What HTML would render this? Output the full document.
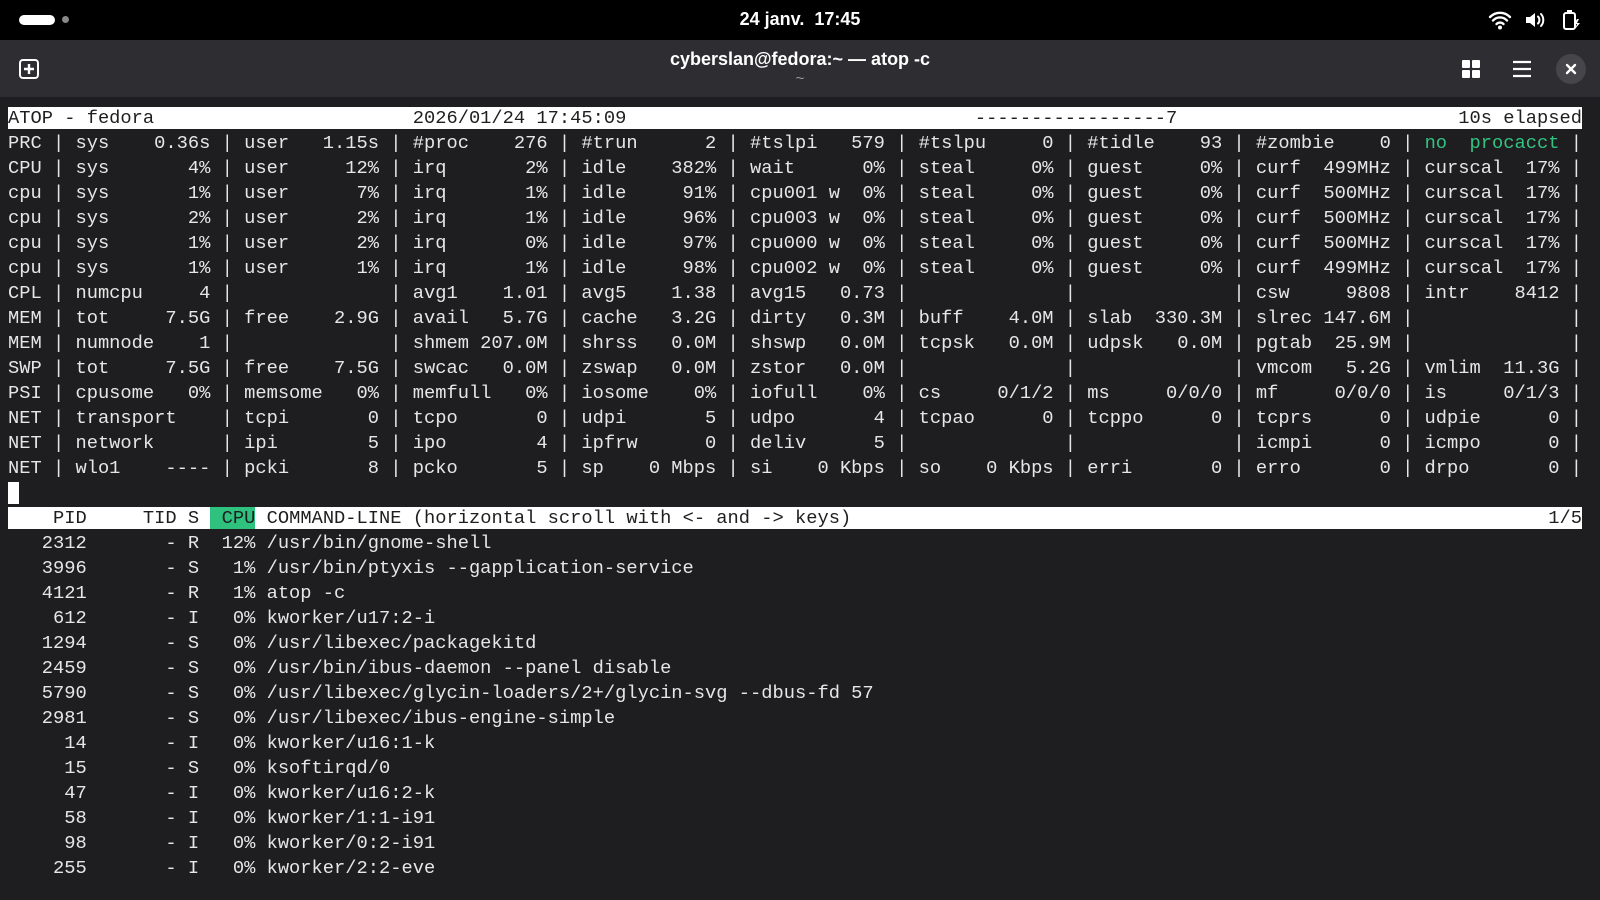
<!DOCTYPE html>
<html><head><meta charset="utf-8">
<style>
html,body{margin:0;padding:0;width:1600px;height:900px;overflow:hidden;background:#1e1e20;}
#top{position:absolute;left:0;top:0;width:1600px;height:40px;background:#000;}
#clock{position:absolute;left:0;width:1600px;top:9px;text-align:center;color:#fff;font:bold 18px "Liberation Sans",sans-serif;}
#hb{position:absolute;left:0;top:40px;width:1600px;height:57px;background:#2e2e32;}
#title{position:absolute;left:0;width:1600px;top:9px;text-align:center;color:#fff;font:bold 18px "Liberation Sans",sans-serif;}
#sub{position:absolute;left:0;width:1600px;top:30px;text-align:center;color:#999;font:15px "Liberation Sans",sans-serif;}
#term{position:absolute;left:8px;top:106px;margin:0;font-family:"Liberation Mono",monospace;font-size:18.74px;line-height:25px;color:#e6e6e6;white-space:pre;}
.inv{background:#fff;color:#1e1e20;}
.g{color:#33c27f;}
.gb{background:#2ec27e;color:#1e1e20;}
.cur{background:#fff;}
</style></head><body>
<div id="top">
 <div style="position:absolute;left:19px;top:15px;width:36px;height:10px;border-radius:5px;background:#fff"></div>
 <div style="position:absolute;left:62px;top:16px;width:7px;height:7px;border-radius:4px;background:#888"></div>
 <div id="clock">24 janv.&nbsp; 17:45</div>
 <svg style="position:absolute;left:1488px;top:10px" width="24" height="20" viewBox="0 0 24 20"><path d="M2 7a14 14 0 0 1 20 0M5 10.5a9.5 9.5 0 0 1 14 0M8.5 14a5 5 0 0 1 7 0" stroke="#fff" stroke-width="2.4" fill="none" stroke-linecap="round"/><circle cx="12" cy="17.5" r="2" fill="#fff"/></svg>
 <svg style="position:absolute;left:1524px;top:11px" width="24" height="18" viewBox="0 0 24 18"><path d="M2 6h4l5-4v14l-5-4H2z" fill="#fff"/><path d="M14 5.5a5 5 0 0 1 0 7M17 3a9 9 0 0 1 0 12" stroke="#fff" stroke-width="2" fill="none" stroke-linecap="round"/></svg>
 <svg style="position:absolute;left:1562px;top:9px" width="20" height="22" viewBox="0 0 20 22"><rect x="2" y="4" width="11" height="16" rx="2" stroke="#fff" stroke-width="2" fill="none"/><rect x="5" y="1" width="5" height="3" fill="#fff"/><path d="M15 10l-3 5h3l-2 5 5-6h-3l2-4z" fill="#fff"/></svg>
</div>
<div id="hb">
 <svg style="position:absolute;left:18px;top:18px" width="22" height="22" viewBox="0 0 22 22"><rect x="2" y="2" width="18" height="18" rx="3" stroke="#fff" stroke-width="2" fill="none"/><path d="M11 6v10M6 11h10" stroke="#fff" stroke-width="2.4"/></svg>
 <div id="title">cyberslan@fedora:~ — atop -c</div>
 <div id="sub">~</div>
 <svg style="position:absolute;left:1462px;top:20px" width="18" height="18" viewBox="0 0 18 18"><rect x="0" y="0" width="8" height="8" rx="1" fill="#fff"/><rect x="10" y="0" width="8" height="8" rx="1" fill="#fff"/><rect x="0" y="10" width="8" height="8" rx="1" fill="#fff"/><rect x="10" y="10" width="8" height="8" rx="1" fill="#fff"/></svg>
 <svg style="position:absolute;left:1512px;top:20px" width="20" height="18" viewBox="0 0 20 18"><path d="M1 2h18M1 9h18M1 16h18" stroke="#fff" stroke-width="2.2"/></svg>
 <div style="position:absolute;left:1556px;top:14px;width:30px;height:30px;border-radius:15px;background:#45454a"></div>
 <svg style="position:absolute;left:1565px;top:23px" width="12" height="12" viewBox="0 0 12 12"><path d="M2 2l8 8M10 2l-8 8" stroke="#fff" stroke-width="2.4" stroke-linecap="round"/></svg>
</div>
<pre id="term"><span class="inv">ATOP - fedora                       2026/01/24 17:45:09                               -----------------7                         10s elapsed</span>
PRC | sys    0.36s | user   1.15s | #proc    276 | #trun      2 | #tslpi   579 | #tslpu     0 | #tidle    93 | #zombie    0 | <span class="g">no  procacct</span> |
CPU | sys       4% | user     12% | irq       2% | idle    382% | wait      0% | steal     0% | guest     0% | curf  499MHz | curscal  17% |
cpu | sys       1% | user      7% | irq       1% | idle     91% | cpu001 w  0% | steal     0% | guest     0% | curf  500MHz | curscal  17% |
cpu | sys       2% | user      2% | irq       1% | idle     96% | cpu003 w  0% | steal     0% | guest     0% | curf  500MHz | curscal  17% |
cpu | sys       1% | user      2% | irq       0% | idle     97% | cpu000 w  0% | steal     0% | guest     0% | curf  500MHz | curscal  17% |
cpu | sys       1% | user      1% | irq       1% | idle     98% | cpu002 w  0% | steal     0% | guest     0% | curf  499MHz | curscal  17% |
CPL | numcpu     4 |              | avg1    1.01 | avg5    1.38 | avg15   0.73 |              |              | csw     9808 | intr    8412 |
MEM | tot     7.5G | free    2.9G | avail   5.7G | cache   3.2G | dirty   0.3M | buff    4.0M | slab  330.3M | slrec 147.6M |              |
MEM | numnode    1 |              | shmem 207.0M | shrss   0.0M | shswp   0.0M | tcpsk   0.0M | udpsk   0.0M | pgtab  25.9M |              |
SWP | tot     7.5G | free    7.5G | swcac   0.0M | zswap   0.0M | zstor   0.0M |              |              | vmcom   5.2G | vmlim  11.3G |
PSI | cpusome   0% | memsome   0% | memfull   0% | iosome    0% | iofull    0% | cs     0/1/2 | ms     0/0/0 | mf     0/0/0 | is     0/1/3 |
NET | transport    | tcpi       0 | tcpo       0 | udpi       5 | udpo       4 | tcpao      0 | tcppo      0 | tcprs      0 | udpie      0 |
NET | network      | ipi        5 | ipo        4 | ipfrw      0 | deliv      5 |              |              | icmpi      0 | icmpo      0 |
NET | wlo1    ---- | pcki       8 | pcko       5 | sp    0 Mbps | si    0 Kbps | so    0 Kbps | erri       0 | erro       0 | drpo       0 |
<span class="cur"> </span>
<span class="inv">    PID     TID S </span><span class="gb"> CPU</span><span class="inv"> COMMAND-LINE (horizontal scroll with &lt;- and -&gt; keys)                                                              1/5</span>
   2312       - R  12% /usr/bin/gnome-shell
   3996       - S   1% /usr/bin/ptyxis --gapplication-service
   4121       - R   1% atop -c
    612       - I   0% kworker/u17:2-i
   1294       - S   0% /usr/libexec/packagekitd
   2459       - S   0% /usr/bin/ibus-daemon --panel disable
   5790       - S   0% /usr/libexec/glycin-loaders/2+/glycin-svg --dbus-fd 57
   2981       - S   0% /usr/libexec/ibus-engine-simple
     14       - I   0% kworker/u16:1-k
     15       - S   0% ksoftirqd/0
     47       - I   0% kworker/u16:2-k
     58       - I   0% kworker/1:1-i91
     98       - I   0% kworker/0:2-i91
    255       - I   0% kworker/2:2-eve</pre>
</body></html>
